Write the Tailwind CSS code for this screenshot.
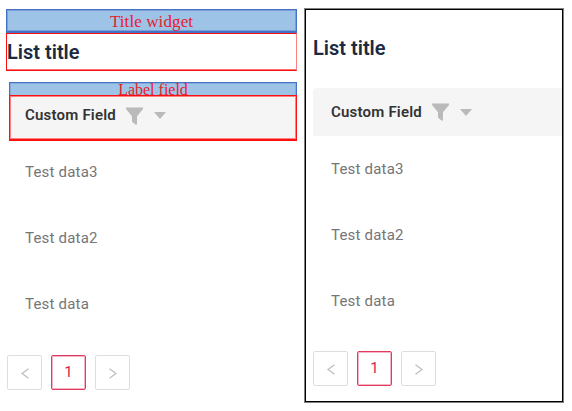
<!DOCTYPE html>
<html lang="en">
<head>
<meta charset="utf-8">
<title>List title</title>
<script src="https://cdn.jsdelivr.net/npm/@tailwindcss/browser@4"></script>
</head>
<body class="bg-white">
<main class="flex w-[572px] h-[411px] overflow-hidden bg-white font-['Roboto',sans-serif] pt-[9px] pl-[6px]">
  <section class="w-[291px] shrink-0 flex flex-col">
    <div class="h-[24px] bg-[#9dc3e6] border border-b-2 border-[#4472c4] shadow-[inset_0_0_0_1px_#7a9fd8] flex justify-center items-center pt-[2px] font-['Liberation_Serif',serif] text-[17px] leading-none tracking-[0.1px] text-[#e8202c]"><span class="whitespace-nowrap">Title widget</span></div>
    <div class="h-[38px] border border-[#ff1010] border-r-[#ff8080] shadow-[inset_0_-1px_0_#ff7070] flex items-center"><h2 class="text-[20px] leading-none font-semibold text-[#1b2a41] whitespace-nowrap">List title</h2></div>
    <div class="mt-[11px] ml-[3px] h-[14px] bg-[#9dc3e6] border border-b-0 border-[#4472c4] shadow-[inset_0_0_0_1px_#86abdd] flex justify-center items-center font-['Liberation_Serif',serif] text-[16px] leading-none text-[#e8202c]"><span class="whitespace-nowrap">Label field</span></div>
    <div class="ml-[3px] h-[46px] -mt-px bg-[#f5f5f5] border border-b-2 border-[#ff1010] shadow-[inset_0_0_0_1px_#ff8080] flex items-center pl-[15px] pb-[4px]">
      <span class="text-[15px] leading-none font-semibold text-[#333] tracking-[0.2px] whitespace-nowrap w-[101px]">Custom Field</span>
      <svg class="w-[17px] h-[18px]" viewBox="0 0 17 18" fill="#bababa"><path d="M0 .5H17V2L11 9.200V17.500H9.500L6 14.800V9.200L0 2Z"/></svg>
      <svg class="ml-[11px] w-[12px] h-[7px]" viewBox="0 0 12 7" fill="#bababa"><path d="M0 0H12L6 7Z"/></svg>
    </div>
    <ul class="-mt-[2px] pl-[19px] text-[15px] tracking-[0.2px] text-[#757575]">
      <li class="h-[66px] flex items-center">Test data3</li>
      <li class="h-[66px] flex items-center">Test data2</li>
      <li class="h-[66px] flex items-center">Test data</li>
    </ul>
    <nav class="flex gap-[9px] pl-px mt-[18px]">
      <button class="size-[35px] border border-[#dedede] rounded-[2px] flex items-center justify-center pt-[2px]"><svg class="w-[8px] h-[11px]" viewBox="0 0 8 11" fill="none" stroke="#bcbcbc" stroke-width="1.200"><path d="M7.500.8 1 5.500l6.500 4.700"/></svg></button>
      <button class="size-[35px] border border-[#e03a60] shadow-[inset_0_0_0_1px_#f5b5c4] rounded-[2px] flex items-center justify-center text-[15px] text-[#d81b50]">1</button>
      <button class="size-[35px] border border-[#dedede] rounded-[2px] flex items-center justify-center pt-[2px]"><svg class="w-[8px] h-[11px]" viewBox="0 0 8 11" fill="none" stroke="#bcbcbc" stroke-width="1.200"><path d="m.5.8 6.500 4.700-6.500 4.700"/></svg></button>
    </nav>
  </section>
  <section class="ml-[8px] w-[258px] h-[393px] shrink-0 border border-black shadow-[0_0_0_1px_#808080] flex flex-col pl-[7px]">
    <h2 class="h-[78px] pb-[3px] flex items-center text-[20px] leading-none font-semibold text-[#1b2a41] whitespace-nowrap">List title</h2>
    <div class="h-[48px] bg-[#f5f5f5] rounded-tl-[4px] flex items-center pl-[18px]">
      <span class="text-[15px] leading-none font-semibold text-[#333] tracking-[0.2px] whitespace-nowrap w-[101px]">Custom Field</span>
      <svg class="w-[17px] h-[18px]" viewBox="0 0 17 18" fill="#bababa"><path d="M0 .5H17V2L11 9.200V17.500H9.500L6 14.800V9.200L0 2Z"/></svg>
      <svg class="ml-[11px] w-[12px] h-[7px]" viewBox="0 0 12 7" fill="#bababa"><path d="M0 0H12L6 7Z"/></svg>
    </div>
    <ul class="pl-[18px] text-[15px] tracking-[0.2px] text-[#757575]">
      <li class="h-[66px] flex items-center">Test data3</li>
      <li class="h-[66px] flex items-center">Test data2</li>
      <li class="h-[66px] flex items-center">Test data</li>
    </ul>
    <nav class="flex gap-[9px] mt-[17px]">
      <button class="size-[35px] border border-[#dedede] rounded-[2px] flex items-center justify-center pt-[2px]"><svg class="w-[8px] h-[11px]" viewBox="0 0 8 11" fill="none" stroke="#bcbcbc" stroke-width="1.200"><path d="M7.500.8 1 5.500l6.500 4.700"/></svg></button>
      <button class="size-[35px] border border-[#e03a60] shadow-[inset_0_0_0_1px_#f5b5c4] rounded-[2px] flex items-center justify-center text-[15px] text-[#d81b50]">1</button>
      <button class="size-[35px] border border-[#dedede] rounded-[2px] flex items-center justify-center pt-[2px]"><svg class="w-[8px] h-[11px]" viewBox="0 0 8 11" fill="none" stroke="#bcbcbc" stroke-width="1.200"><path d="m.5.8 6.500 4.700-6.500 4.700"/></svg></button>
    </nav>
  </section>
</main>
</body>
</html>
